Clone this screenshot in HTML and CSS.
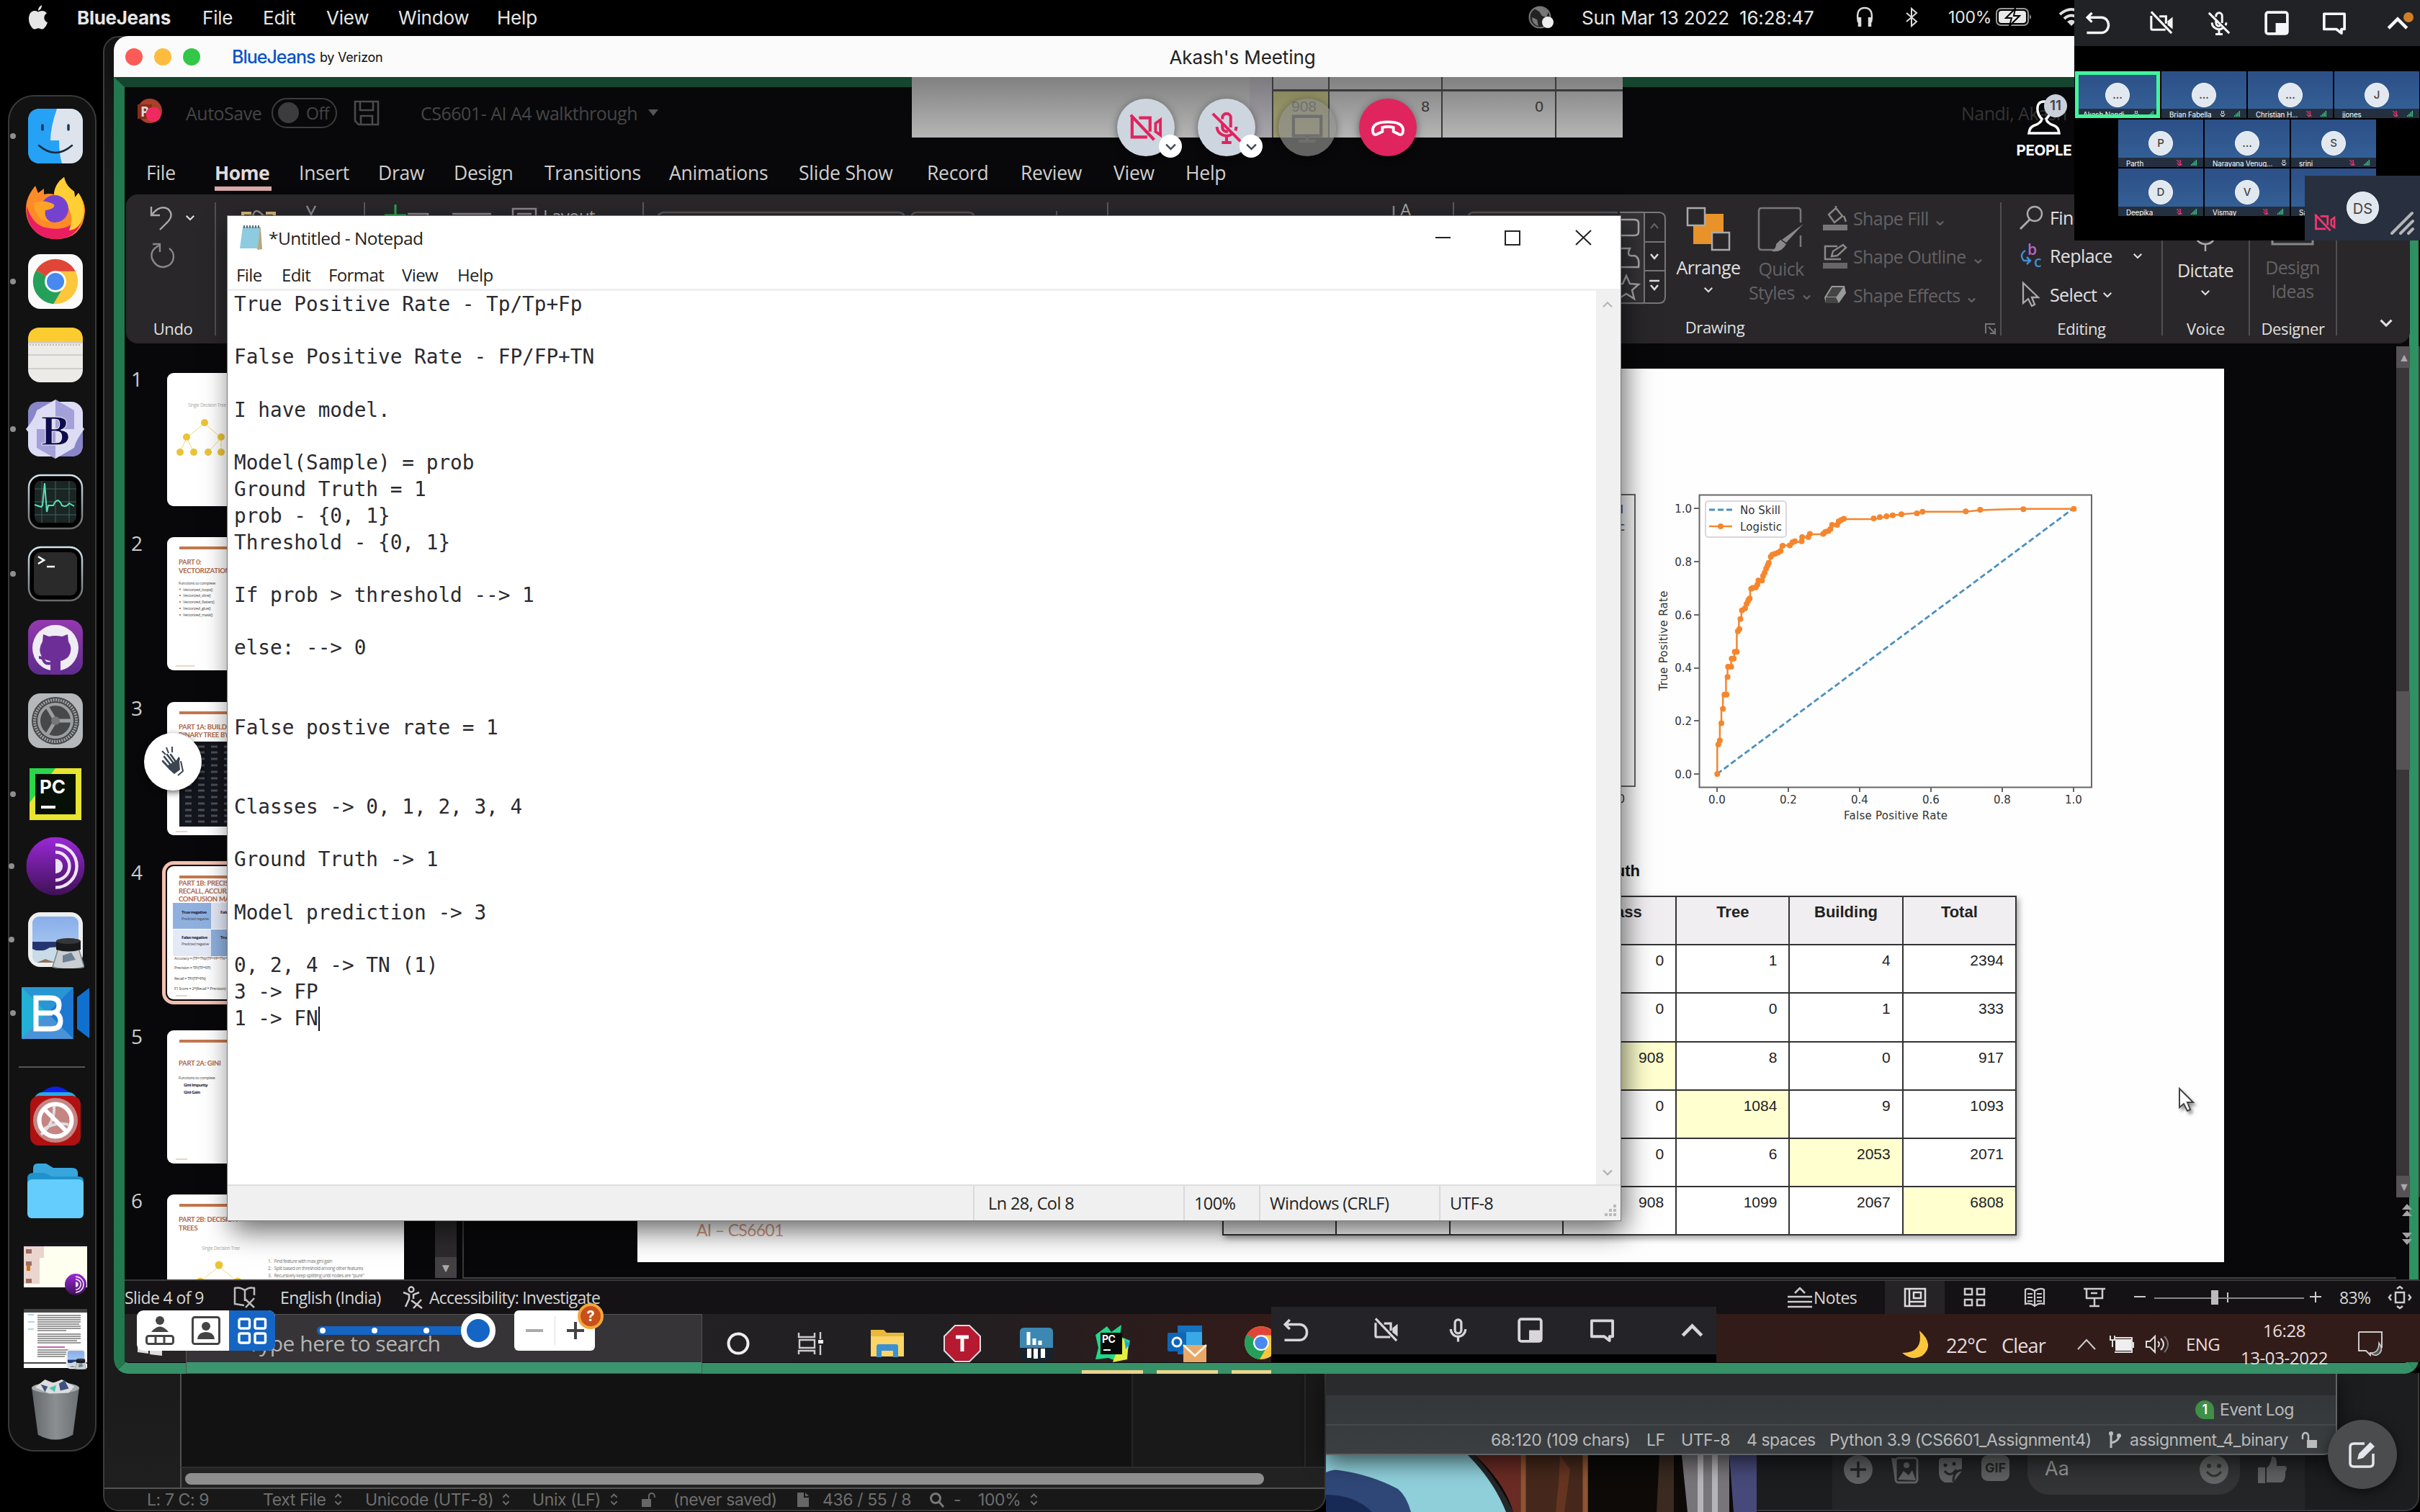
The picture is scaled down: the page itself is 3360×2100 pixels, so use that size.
FILE: index.html
```html
<!DOCTYPE html>
<html lang="en">
<head>
<meta charset="utf-8">
<title>Akash's Meeting</title>
<link rel="stylesheet" href="styles.css">
</head>
<body>
<svg class="defs" width="0" height="0">
  <defs>
    <linearGradient id="tor" x1="0" y1="0" x2="0" y2="1"><stop offset="0" stop-color="#9b28d8"/><stop offset="1" stop-color="#3f1157"/></linearGradient>
    <linearGradient id="sky" x1="0" y1="0" x2="0" y2="1"><stop offset="0" stop-color="#88adea"/><stop offset="1" stop-color="#b5d3f2"/></linearGradient>
    <linearGradient id="ring" x1="0" y1="0" x2="0" y2="1"><stop offset="0" stop-color="#cfe6ee"/><stop offset="1" stop-color="#6a6a6a"/></linearGradient>
    <linearGradient id="gh" x1="0" y1="0" x2="0" y2="1"><stop offset="0" stop-color="#9439ae"/><stop offset="1" stop-color="#5d2c8c"/></linearGradient>
    <linearGradient id="can" x1="0" y1="0" x2="1" y2="0"><stop offset="0" stop-color="#63676a"/><stop offset=".5" stop-color="#8b8f91"/><stop offset="1" stop-color="#6b6f72"/></linearGradient>
  </defs>
  <symbol id="camoff" viewBox="0 0 24 24"><path d="M2 1l20 21" stroke="currentColor" stroke-width="2.200" fill="none"/><path d="M10 5.500h6.500v7M16 18.500H3.200a1.200 1.200 0 0 1-1.200-1.200V5" fill="none" stroke="currentColor" stroke-width="2.200"/><path d="M18 10l5-4v12l-5-4z" fill="currentColor"/></symbol>
  <symbol id="camoff2" viewBox="0 0 24 24"><path d="M1 3l17 18M7 5h8v10M13 19H2V5" stroke="currentColor" stroke-width="2.200" fill="none"/><path d="M19 9l3.500-2.500v11L19 15z" fill="none" stroke="currentColor" stroke-width="2"/></symbol>
  <symbol id="micoff" viewBox="0 0 24 24"><path d="M2 2l20 20M9 6V5a3 3 0 0 1 6 0v7M9 9.500V12a3 3 0 0 0 4 2.800M5 11.500a7 7 0 0 0 11 5.300M19 11.500a7 7 0 0 1-.6 2.800M12 19v4M8.500 23h7" stroke="currentColor" stroke-width="2.100" fill="none"/></symbol>
  <symbol id="mic" viewBox="0 0 24 24"><path d="M9 5a3 3 0 0 1 6 0v7a3 3 0 0 1-6 0zM5 11a7 7 0 0 0 14 0M12 18v5" stroke="currentColor" stroke-width="2.200" fill="none"/></symbol>
  <symbol id="pip" viewBox="0 0 24 24"><rect x="1.500" y="1.500" width="21" height="21" rx="2" fill="none" stroke="currentColor" stroke-width="2.600"/><path d="M11 12h12v11H11z" fill="currentColor"/></symbol>
  <symbol id="chat" viewBox="0 0 24 24"><path d="M2 3h20v15h-3v4l-5-4H2z" fill="none" stroke="currentColor" stroke-width="2.600" stroke-linejoin="round"/></symbol>
  <symbol id="back" viewBox="0 0 24 24"><path d="M6 2L1.500 6.500 6 11M2 6.500h13.500a6.800 7.500 0 0 1 0 15H1" fill="none" stroke="currentColor" stroke-width="2.400"/></symbol>
  <symbol id="up" viewBox="0 0 24 24"><path d="M3 17l9-9 9 9" fill="none" stroke="currentColor" stroke-width="3.200"/></symbol>
  <symbol id="down" viewBox="0 0 24 24"><path d="M3 8l9 9 9-9" fill="none" stroke="currentColor" stroke-width="3.600"/></symbol>
  <symbol id="updn" viewBox="0 0 12 18"><path d="M1.500 6L6 1.500 10.500 6M1.500 12L6 16.500 10.500 12" fill="none" stroke="#6e6e6e" stroke-width="2"/></symbol>
  <symbol id="chrome" viewBox="0 0 48 48"><circle cx="24" cy="24" r="22" fill="#fdc73c"/><path d="M24 24L5 13A22 22 0 0 1 43.500 14H24z" fill="#e0453a"/><path d="M5 13a22 22 0 0 0 17 33l10-17-8-5z" fill="#25a05b"/><circle cx="24" cy="24" r="10.500" fill="#fff"/><circle cx="24" cy="24" r="8.500" fill="#4889f0"/></symbol>
  <symbol id="onion" viewBox="0 0 48 48"><circle cx="24" cy="24" r="24" fill="url(#tor)"/><path d="M24 6.500a17.500 17.500 0 0 1 0 35M24 12.500a11.500 11.500 0 0 1 0 23" fill="none" stroke="#efe4f6" stroke-width="2.600"/><path d="M24 18a6 6 0 0 1 0 12z" fill="#efe4f6"/></symbol>
  <symbol id="photo" viewBox="0 0 80 80"><rect x="2" y="2" width="76" height="76" rx="17" fill="#eeeeef"/><rect x="8" y="8" width="64" height="64" rx="9" fill="url(#sky)"/><path d="M8 43h64v12H8z" fill="#25356f"/><path d="M8 53q12 6 24-2 20-2 40 6v6q0 9-9 9H17q-9 0-9-9z" fill="#c8dbe6"/><path d="M14 72l12-5 14 5z" fill="#8b7560"/><path d="M44 52h28l8 26q-22 6-44 0z" fill="#c8ced2" stroke="#7d8488" stroke-width="1.500"/><path d="M50 62l12-4 6 10-18 4z" fill="#6d8092"/><path d="M41 42q17-7 34 0v12q-17 5-34 0z" fill="#17191a"/><ellipse cx="58" cy="42" rx="17" ry="4" fill="#343638"/></symbol>
  <symbol id="bars" viewBox="0 0 8 8"><path d="M0 8V6h1.400v2zM2.200 8V4h1.400v4zM4.400 8V2h1.400v6zM6.600 8V0H8v8z" fill="#3cc583"/></symbol>
  <symbol id="tinymic" viewBox="0 0 8 8"><path d="M2.600 0h2.800v3.500H2.600zM1 4a3 3 0 0 0 6 0M4 6v2M2 7.700h4" fill="none" stroke="currentColor" stroke-width="1"/></symbol>
  <symbol id="tinymicoff" viewBox="0 0 8 8"><path d="M0 0l7.500 7.500M2.800 1h2.800v3.500M1 4a3 3 0 0 0 5 2M4 6.500v1.300M2 7.700h4" fill="none" stroke="currentColor" stroke-width="1.100"/></symbol>
</svg>

<header class="menubar">
  <svg width="28" height="34" viewBox="0 0 28 34"><path d="M19 0q.6 5-4.800 8Q13.500 3 19 0zM14 9.500q3-1.800 6-1.500 4 .4 6 3.200-4 2.600-3.600 7 .4 4.200 4.600 6-1.600 4.800-4.800 8-2.200 2.200-5 .8-3-1.400-6 0-3 1.400-5-.8Q1.500 27 1 20.500.500 12 5.500 9 9 7 14 9.500z" fill="#e6e6e6"/></svg>
  <b>BlueJeans</b><span>File</span><span>Edit</span><span>View</span><span>Window</span><span>Help</span>
  <svg width="36" height="34" viewBox="0 0 36 34"><circle cx="16" cy="17" r="14.500" fill="#222" stroke="#777" stroke-width="2"/><path d="M8 5q8-5 14 0l6 4-3 8-6-2-4-6zM5 17l7 3 2 9q-9-2-9-12z" fill="#777"/><circle cx="27" cy="24" r="8" fill="#eee"/></svg>
  <span class="pre">Sun Mar 13 2022  16:28:47</span>
  <svg width="26" height="30" viewBox="0 0 26 30"><path d="M4 22Q0 2 13 2t9 20" fill="none" stroke="#ddd" stroke-width="2.400"/><path d="M6 15v13M20 15v13" stroke="#ddd" stroke-width="4.500"/></svg>
  <svg width="18" height="28" viewBox="0 0 18 28"><path d="M2 8l14 12-7 6V2l7 6L2 20" fill="none" stroke="#ddd" stroke-width="2"/></svg>
  <span class="pct">100%</span>
  <svg width="52" height="26" viewBox="0 0 52 26"><rect x="1" y="1" width="44" height="23" rx="6" fill="none" stroke="#999" stroke-width="2"/><rect x="4" y="4" width="38" height="17" rx="4" fill="#e8e8e8"/><path d="M47 9q4 3.500 0 7z" fill="#999"/><path d="M27 1L14 14h8l-3 11 14-14h-8z" fill="#e8e8e8" stroke="#000" stroke-width="2"/></svg>
  <svg width="36" height="28" viewBox="0 0 36 28"><path d="M2 10q16-14 32 0M8 16q10-9 20 0" fill="none" stroke="#ddd" stroke-width="4"/><path d="M12 20q6-5 12 0l-6 6z" fill="#ddd"/></svg>
</header>

<nav class="dock">
  <i class="ic run"><svg viewBox="0 0 76 76"><rect width="76" height="76" rx="17" fill="#dde4ee"/><path d="M40 0Q31 26 31 44h12q0 18 4 32H17Q0 76 0 59V17Q0 0 17 0z" fill="#25a2f5"/><path d="M20 23v6M56 23v6" stroke="#173a5e" stroke-width="3.500" stroke-linecap="round"/><path d="M15 51q23 20 46 0" fill="none" stroke="#1c2b3b" stroke-width="2.500" stroke-linecap="round"/></svg></i>
  <i class="ic"><svg viewBox="0 0 84 86"><path d="M42 86C16 86 0 66 1 42 2 28 8 20 14 12l4 10 8-6v8q8-2 14 0Q42 8 54 0q2 12 14 20l1 8 5-6q10 14 9 26-3 38-41 38z" fill="#ff8a28"/><path d="M42 86C16 86 0 66 2 40q8 26 26 30 34 8 52-20-4 36-38 36z" fill="#ea1d63"/><path d="M54 0q2 12 14 20l1 8 5-6q9 14 7 30-4 20-20 22 8-20-4-36-16-6-17-16Q42 8 54 0z" fill="#ffcf35"/><circle cx="41" cy="44" r="19" fill="#7542cf"/><path d="M12 36q14-6 28 2 2 6-12 8-2 12 8 16-22 0-24-26z" fill="#ffa328"/></svg></i>
  <i class="ic run"><svg viewBox="0 0 76 76"><rect width="76" height="76" rx="17" fill="#fafafa"/><use href="#chrome" x="4" y="4" width="68" height="68"/></svg></i>
  <i class="ic"><svg viewBox="0 0 76 76"><rect width="76" height="76" rx="17" fill="#ecebe8"/><path d="M0 20v-3Q0 0 17 0h42q17 0 17 17v3z" fill="#fccb30"/><path d="M0 21h76M0 38h76M0 57h76" stroke="#c6c5c2" stroke-width="1.500"/><path d="M2 24h72" stroke="#bbb" stroke-width="2" stroke-dasharray="2 2"/></svg></i>
  <i class="ic run"><svg viewBox="0 0 84 84"><rect x="4" y="4" width="76" height="76" rx="16" fill="#dcdcf6"/><path d="M4 42V20Q4 4 20 4h22v38zM42 42h38v22q0 16-16 16H42z" fill="#8885c8"/><path d="M16 16h52v52H16z" fill="#1a1a1a"/><path d="M42 1l26 15q2 10 14 26-12 16-14 26L42 83 16 68Q14 58 1 42q13-16 15-26z" fill="#dcdcf4"/><path d="M42 1l26 15v26H42zM16 42h26v41L16 68z" fill="#a3a0da"/><text x="42" y="64" text-anchor="middle" class="bb">B</text></svg></i>
  <i class="ic"><svg viewBox="0 0 76 76"><rect x="1" y="1" width="74" height="74" rx="17" fill="#000" stroke="url(#ring)" stroke-width="2.500"/><rect x="9" y="9" width="58" height="58" rx="8" fill="#1b2524"/><path d="M19 9v58M38 9v58M57 9v58M9 20h58M9 38h58M9 56h58" stroke="#3b6658"/><path d="M9 42l9 3 2-2 3-31 3 40 2-9h7q6-14 12 0 6 3 10-3l7 4" fill="none" stroke="#5ce0b8" stroke-width="2"/></svg></i>
  <i class="ic run"><svg viewBox="0 0 76 76"><rect x="1" y="1" width="74" height="74" rx="17" fill="#000" stroke="url(#ring)" stroke-width="2.500"/><rect x="8" y="8" width="60" height="60" rx="9" fill="#2a2a2a"/><path d="M14 14l8 5-8 5M26 28h11" fill="none" stroke="#fff" stroke-width="2.600"/></svg></i>
  <i class="ic"><svg viewBox="0 0 76 76"><rect width="76" height="76" rx="17" fill="url(#gh)"/><circle cx="38" cy="39" r="32" fill="#efedf3"/><path d="M21 20l8 3q9-2 18 0l8-3 1 10q7 10 0 21-5 5-11 6v19H31V57q-8-1-12-6-6-10 1-21z" fill="#6d2f97"/><path d="M15 52q6 0 7 5 3 5 9 3" fill="none" stroke="#6d2f97" stroke-width="4"/></svg></i>
  <i class="ic"><svg viewBox="0 0 76 76"><rect width="76" height="76" rx="17" fill="#b4b8ba"/><circle cx="38" cy="38" r="33" fill="#46484a"/><circle cx="38" cy="38" r="29" fill="none" stroke="#a0a3a5" stroke-width="4" stroke-dasharray="2 1.500"/><circle cx="38" cy="38" r="23" fill="none" stroke="#9c9fa1" stroke-width="4"/><path d="M38 38h23M38 38L26 18M38 38L26 58" stroke="#9c9fa1" stroke-width="5"/><circle cx="38" cy="38" r="6" fill="#777"/></svg></i>
  <i class="ic run"><svg viewBox="0 0 76 76"><rect x="2" y="2" width="72" height="72" fill="#e8e52f"/><path d="M2 2h36L2 50z" fill="#2ad64a"/><rect x="10" y="10" width="56" height="56" fill="#061006"/><text x="16" y="37" class="pc">PC</text><path d="M18 56h20" stroke="#fff" stroke-width="4"/></svg></i>
  <i class="ic run"><svg viewBox="-2 -2 52 52"><use href="#onion" width="48" height="48" x="0" y="0"/></svg></i>
  <i class="ic run"><svg viewBox="0 0 80 80"><use href="#photo"/></svg></i>
  <i class="ic wide run"><svg viewBox="0 0 94 72"><rect width="72" height="72" rx="2" fill="#1d78d2"/><path d="M0 0h72L36 36z" fill="#2896d4"/><path d="M0 0l36 36L0 72z" fill="#22b0d4"/><path d="M0 72l36-36 36 36z" fill="#4a92d8"/><path d="M77 14L94 1v70L77 58z" fill="#1070cf"/><path d="M20 15h20q12 0 12 10 0 8-6 10 8 3 8 12 0 11-13 11H20zM21 36h22" fill="none" stroke="#fff" stroke-width="7"/></svg></i>
  <hr>
  <i class="ic"><svg viewBox="0 0 76 84"><path d="M16 12Q38-10 60 12z" fill="#0d20e8"/><path d="M8 18q4-9 12-9h36q8 0 12 9z" fill="#28a9e5"/><rect x="3" y="14" width="70" height="69" rx="12" fill="#b01010"/><circle cx="38" cy="48" r="31" fill="#c58582"/><path d="M18 68q20-18 18-40M22 60q16-10 34-6" stroke="#ddd" stroke-width="4" fill="none"/><circle cx="38" cy="48" r="22.500" fill="none" stroke="#fff" stroke-width="6"/><path d="M22 32l32 32" stroke="#fff" stroke-width="6"/></svg></i>
  <i class="ic"><svg viewBox="0 0 80 78"><path d="M9 8q0-7 6-7h12l10 6h26q8 0 8 7v12H9z" fill="#38a6dc"/><path d="M1 22q0-8 8-8h16l10 5h38q6 0 6 7v20H1z" fill="#1f92cd"/><rect x="1" y="23" width="78" height="54" rx="6" fill="#64cdfe"/></svg></i>
  <i class="ic wide"><svg viewBox="0 0 88 74"><rect width="88" height="62" fill="#fffff0"/><path d="M0 0h88v5H0z" fill="#15151f"/><path d="M0 5h28v16H22v36H0z" fill="#ead4ce"/><path d="M3 9h8v6H3zM3 26h8v6H3zM3 50h8v6H3z" fill="#9c6e62"/><path d="M4 31h5v8H4z" fill="#cf7415"/><use href="#onion" x="57" y="43" width="30" height="30"/></svg></i>
  <i class="ic wide"><svg viewBox="0 0 88 86"><rect width="88" height="82" fill="#fff"/><path d="M0 0h88v5H0z" fill="#454545"/><path d="M0 75h88" stroke="#444" stroke-width="2"/><path d="M19 9h60M19 12h60M19 15h60M19 18h60M19 21h58M19 24h60M19 27h60M19 30h40M19 35h60M19 38h60M19 41h60M19 44h55M19 47h60M19 57h58M19 60h40M19 63h40M19 66h38" stroke="#777" stroke-width="1.300"/><path d="M6 8h8M6 18h9M6 28h8" stroke="#5ab0cc"/><path d="M19 53h38" stroke="#b03090" stroke-width="1.500"/><use href="#photo" x="58" y="55" width="29" height="29"/></svg></i>
  <i class="ic"><svg viewBox="0 0 70 88"><path d="M1 12h68l-9 68q-25 14-50 0z" fill="url(#can)"/><ellipse cx="35" cy="13" rx="34" ry="8" fill="#a7abad"/><path d="M6 12L20 1l12 5 12-5 18 10-8 9-28 1z" fill="#ddd"/><path d="M14 8l10 3-4 8zM40 7l8-5 6 12-12 3z" fill="#3c5380"/><path d="M26 13l10-4-2 10z" fill="#4cc6b2"/></svg></i>
</nav>

<section class="editor">
  <div class="ed-body"><div class="ed-text"></div><div class="ed-side"></div><div class="ed-edge"></div></div>
  <div class="ed-scroll"><i></i></div>
  <footer><span>L: 7 C: 9</span><span>Text File</span><svg width="11" height="17"><use href="#updn"/></svg><span>Unicode (UTF-8)</span><svg width="11" height="17"><use href="#updn"/></svg><span>Unix (LF)</span><svg width="11" height="17"><use href="#updn"/></svg>
    <svg width="20" height="20" viewBox="0 0 20 20"><path d="M1 9h13v11H1z" fill="#666"/><path d="M11 9V5q0-4 4-4t4 6" fill="none" stroke="#666" stroke-width="2"/></svg>
    <span>(never saved)</span><svg width="16" height="20" viewBox="0 0 16 20"><path d="M0 0h9v7h7v13H0zM11 0l5 5h-5z" fill="#666"/></svg><span>436 / 55 / 8</span>
    <svg width="22" height="22" viewBox="0 0 22 22"><circle cx="9" cy="9" r="6.500" fill="none" stroke="#777" stroke-width="3"/><path d="M13 13l7 8" stroke="#777" stroke-width="3"/></svg><span>-</span><span>100%</span><svg width="11" height="17"><use href="#updn"/></svg></footer>
</section>

<section class="messenger">
  <svg class="album" width="598" height="79" viewBox="0 0 598 79"><rect width="598" height="79" fill="#0d0a08"/><path d="M207 0h64v79h-11Q248 38 207 0z" fill="#6a2b24"/><path d="M270 0h94v79h-94z" fill="#45281b"/><path d="M274 0v79M360 0v79" stroke="#8e5433" stroke-width="7"/><path d="M325 0l14 20-8 59h-12l4-40z" fill="#7d3e26" opacity=".6"/><path d="M463 0h20v79h-24z" fill="#3a2a20"/><path d="M494 0h66v79h-58z" fill="#777579"/><path d="M520 0v79M540 0v79" stroke="#b5b4b8" stroke-width="8"/><path d="M560 0h38v79h-32z" fill="#47497a"/><path d="M0 0h206Q240 36 260 79H0z" fill="#25282a"/><path d="M0 0h197Q233 36 250 79H0z" fill="#8fcfda"/><path d="M0 24q10-5 18-3 44 6 82 26 12 10 18 32H0z" fill="#2f4777"/><path d="M0 55q40 0 64 24H0z" fill="#172a55"/></svg>
  <div class="gap"></div>
  <div class="composer">
    <svg width="40" height="40" viewBox="0 0 40 40"><circle cx="20" cy="20" r="20" fill="#606162"/><path d="M9 20h22M20 9v22" stroke="#242526" stroke-width="3.500"/></svg>
    <svg width="40" height="40" viewBox="0 0 40 40"><rect x="7" y="4" width="30" height="34" rx="4" fill="#242526" stroke="#606162" stroke-width="3"/><path d="M1 4h5v30zM10 34l8-12 7 6 5-7 5 14z" fill="#606162"/><circle cx="22" cy="14" r="4" fill="#606162"/></svg>
    <svg width="36" height="40" viewBox="0 0 36 40"><path d="M6 4h28v18L22 38H10q-8-4-8-14V8q0-4 4-4z" fill="#606162"/><path d="M10 22q8 10 16-2M34 21q-12 0-12 16" stroke="#242526" stroke-width="3" fill="none"/><circle cx="11" cy="14" r="2.500" fill="#242526"/><circle cx="23" cy="12" r="2.500" fill="#242526"/></svg>
    <b class="gif">GIF</b>
    <div class="aa"><span>Aa</span><svg width="40" height="40" viewBox="0 0 40 40"><circle cx="20" cy="20" r="20" fill="#646566"/><circle cx="13" cy="15" r="3" fill="#333"/><circle cx="27" cy="15" r="3" fill="#333"/><path d="M10 23q10 12 20 0" fill="none" stroke="#333" stroke-width="3"/></svg></div>
    <svg width="40" height="40" viewBox="0 0 40 40"><path d="M0 17h10v22H0zM12 18q7-6 7-16 8-2 7 13h12q4 3 0 8 1 12-5 15H12z" fill="#606162"/></svg>
  </div>
</section>
<section class="pycharm">
  <div class="py-top"></div>
  <div class="py-log"><i>1</i>Event Log</div>
  <footer><span>68:120 (109 chars)</span><span>LF</span><span>UTF-8</span><span>4 spaces</span><span>Python 3.9 (CS6601_Assignment4)</span>
    <svg width="20" height="26" viewBox="0 0 20 26"><circle cx="5" cy="4" r="3" fill="#bbb"/><circle cx="16" cy="7" r="3" fill="#bbb"/><path d="M5 4v20M16 7q0 8-11 10" fill="none" stroke="#bbb" stroke-width="3"/></svg>
    <span>assignment_4_binary</span><svg width="22" height="24" viewBox="0 0 22 24"><path d="M8 12h14v11H8z" fill="#bbb"/><path d="M10 12V6q-1-4-4-4T2 6v5" fill="none" stroke="#bbb" stroke-width="2.400"/></svg></footer>
</section>
<div class="compose"><svg width="42" height="42" viewBox="0 0 42 42"><path d="M24 6H9q-5 0-5 5v22q0 5 5 5h22q5 0 5-5V20" fill="none" stroke="#e4e6eb" stroke-width="3.500"/><path d="M14 28l2-8L32 4l6 6-16 16z" fill="#e4e6eb"/></svg></div>

<main class="meeting">
  <div class="titlebar"><i class="r"></i><i class="y"></i><i class="g"></i><span class="brand">BlueJeans</span><span class="by">by Verizon</span><h1>Akash's Meeting</h1></div>

  <div class="screen">
    <div class="pp-title">
      <svg width="40" height="40" viewBox="0 0 40 40"><circle cx="18" cy="17" r="17" fill="#a8402a"/><rect x="1" y="8" width="20" height="20" fill="#8a2b1b"/><text x="5" y="25" class="pp">P</text><circle cx="23" cy="22" r="10.500" fill="#ee2a5e"/></svg>
      <span>AutoSave</span><span class="toggle"><i></i>Off</span>
      <svg width="36" height="36" viewBox="0 0 36 36"><path d="M2 2h32v32H7l-5-5zM9 2v12h18V2M10 34V22h16v12" fill="none" stroke="#4a4a4a" stroke-width="2.600"/></svg>
      <span>CS6601- AI A4 walkthrough</span><svg class="caret" width="14" height="9" viewBox="0 0 14 9"><path d="M0 0h14L7 9z" fill="#555"/></svg><span class="owner">Nandi, Akash</span>
    </div>
    <div class="tabs"><span>File</span><span class="on">Home</span><span>Insert</span><span>Draw</span><span>Design</span><span>Transitions</span><span>Animations</span><span>Slide Show</span><span>Record</span><span>Review</span><span>View</span><span>Help</span></div>

    <div class="ribbon">
      <div class="grp undo">
        <div class="big"><svg width="32" height="36" viewBox="0 0 32 36"><path d="M2 3v12h12M3 14Q14 0 25 6q10 9-2 20L14 35" fill="none" stroke="#aaa" stroke-width="2.400"/></svg><svg class="chev" width="14" height="14"><use href="#down"/></svg></div>
        <div class="big"><svg width="36" height="36" viewBox="0 0 36 36"><path d="M4 2h10v11M13 4Q0 10 3 22q5 12 16 12 13-2 14-14 0-8-6-12" fill="none" stroke="#888" stroke-width="2.400"/></svg></div>
        <label>Undo</label>
      </div>
      <div class="grp mid">
        <svg width="1900" height="34" viewBox="300 270 1900 34"><g fill="none" stroke="#8b898b" stroke-width="2.500"><path d="M346 300h5q3-14 15 0h6"/><path d="M426 286l6 12 6-12"/><path d="M506 281v23M893 281v23M1467 293v11M1538 281v23M2018 281v23" stroke="#5c5a5d" stroke-width="2"/><path d="M1935 286v18M566 297h28v7M628 297h54M712 304v-14h32v14M718 297h20"/><path d="M913 304q0-9 10-9h325q8 0 8 9M1265 304q0-9 8-9h72q8 0 8 9M2038 304q0-9 8-9h200" stroke="#555"/></g><path d="M337 300v-4h12M369 296h12v4" fill="none" stroke="#d8b878" stroke-width="4"/><path d="M549 284v20M534 299h30" stroke="#2aa84f" stroke-width="3"/><text x="754" y="309">Layout ⌄</text><text x="1944" y="300" class="dim">A</text></svg>
      </div>
      <div class="grp drawing">
        <div class="gallery"><svg width="64" height="130" viewBox="0 0 64 130"><path d="M0 2h54q9 0 9 9v108q0 9-9 9H0M34 2v126M34 43h29M34 83h29" fill="none" stroke="#777" stroke-width="2"/><path d="M-6 12h26q6 0 6 5v12q0 5-6 5H-6zM0 52h14q-6 12 6 10 8 2 6 16H0M9 90l5 11 12 1-9 8 3 12-11-7-11 7 3-12-9-8 12-1z" fill="none" stroke="#aaa" stroke-width="2.500"/><path d="M43 24l5-6 5 6" fill="none" stroke="#666" stroke-width="2"/><path d="M43 60l5 6 5-6M41 97h14M43 103l5 6 5-6" fill="none" stroke="#ddd" stroke-width="2.600"/></svg></div>
        <div class="tile"><svg width="62" height="62" viewBox="0 0 62 62"><path d="M10 10h42v42H10z" fill="#e8922a"/><path d="M2 2h24v24H2zM36 36h24v24H36z" fill="#29272a" stroke="#aaa" stroke-width="2.500"/></svg><span>Arrange</span><svg class="chev" width="14" height="14"><use href="#down"/></svg></div>
        <div class="tile dim"><svg width="66" height="64" viewBox="0 0 66 64"><path d="M30 60H6q-4 0-4-4V6q0-4 4-4h50q4 0 4 4v16M60 40v16" fill="none" stroke="#777" stroke-width="2.500"/><path d="M64 24L40 50l-6-4zM32 46l8 6q-6 12-20 10 6-4 6-10z" fill="#888"/></svg><span>Quick</span><span class="l2">Styles ⌄</span></div>
        <div class="stack dim">
          <p><svg width="34" height="34" viewBox="0 0 34 34"><path d="M0 26h34v8H0z" fill="#777"/><path d="M8 12L18 3l9 11-11 9zM18 3v-3M29 14l3 8" fill="none" stroke="#888" stroke-width="2.500"/></svg>Shape Fill ⌄</p>
          <p><svg width="34" height="34" viewBox="0 0 34 34"><path d="M0 26h34v8H0z" fill="#666"/><path d="M20 3H3v18h22M12 17l2-7L28 1l4 4-12 11z" fill="none" stroke="#888" stroke-width="2.500"/></svg>Shape Outline ⌄</p>
          <p><svg width="34" height="30" viewBox="0 0 34 30"><path d="M2 18L12 2h18l2 10-10 14H4z" fill="#999"/><path d="M4 18h14l4 8H4zM13 4h15L19 17H5z" fill="#444"/></svg>Shape Effects ⌄</p>
        </div>
        <label>Drawing</label><svg class="launch" width="16" height="16" viewBox="0 0 16 16"><path d="M1 14V1h13M5 5l9 9V7m0 7H7" fill="none" stroke="#777" stroke-width="2"/></svg>
      </div>
      <div class="grp editing">
        <p><svg width="34" height="34" viewBox="0 0 34 34"><circle cx="21" cy="12" r="10" fill="none" stroke="#aaa" stroke-width="2.500"/><path d="M14 20L1 33" stroke="#aaa" stroke-width="3"/></svg>Find</p>
        <p><svg width="34" height="34" viewBox="0 0 34 34"><text x="11" y="16" fill="#b667c4">b</text><text x="20" y="33" fill="#3f8fd6">c</text><path d="M8 10q-9 6-2 14h9M10 19l5 5-5 5" fill="none" stroke="#3f8fd6" stroke-width="2.500"/></svg>Replace<svg class="chev far" width="14" height="14"><use href="#down"/></svg></p>
        <p><svg width="34" height="34" viewBox="0 0 34 34"><path d="M5 1v28l7-6 5 10 4-2-4-10h9z" fill="none" stroke="#aaa" stroke-width="2.300"/></svg>Select<svg class="chev" width="14" height="14"><use href="#down"/></svg></p>
        <label>Editing</label>
      </div>
      <div class="grp voice"><div class="tile"><svg width="32" height="62" viewBox="0 0 32 62"><path d="M2 38q2 14 14 14t14-14M16 52v10" fill="none" stroke="#aaa" stroke-width="2.500"/></svg><span>Dictate</span><svg class="chev" width="14" height="14"><use href="#down"/></svg></div><label>Voice</label></div>
      <div class="grp designer"><div class="tile dim"><svg width="60" height="62" viewBox="0 0 60 62"><path d="M2 2h56v50H2zM10 44h40" fill="none" stroke="#888" stroke-width="3"/></svg><span>Design</span><span class="l2">Ideas</span></div><label>Designer</label></div>
      <div class="grp tail"><svg width="20" height="20"><use href="#down"/></svg></div>
    </div>

    <div class="work">
      <div class="thumbs">
        <div class="th"><b>1</b><svg viewBox="0 0 329 185"><text x="29" y="19" class="t0">Single Decision Tree</text><path d="M52 42L27 62M52 42L75 62M27 62L18 82M27 62l10 20M75 62L57 82M75 62v20" stroke="#f0d77a"/><g fill="#ebc336"><circle cx="52" cy="69" r="5"/><circle cx="27" cy="89" r="5"/><circle cx="75" cy="89" r="5"/><circle cx="18" cy="110" r="5"/><circle cx="37" cy="110" r="5"/><circle cx="57" cy="110" r="5"/><circle cx="75" cy="110" r="5"/></g></svg></div>
        <div class="th"><b>2</b><svg viewBox="0 0 329 185"><path d="M17 15h300" stroke="#c4764c" stroke-width="4"/><text x="16" y="38" class="t1">PART 0:</text><text x="16" y="50" class="t1">VECTORIZATION</text><text x="16" y="66" class="t2">Functions to complete:</text><text x="22" y="75" class="t2">Vectorized_loops()</text><text x="22" y="83" class="t2">Vectorized_slice()</text><text x="22" y="92" class="t2">Vectorized_flatten()</text><text x="22" y="101" class="t2">Vectorized_glue()</text><text x="22" y="110" class="t2">Vectorized_mask()</text><path d="M17 72.500h2M17 81h2M17 90h2M17 99h2M17 108h2" stroke="#c4764c" stroke-width="2"/><path d="M12 179h26" stroke="#d9a78e"/></svg></div>
        <div class="th"><b>3</b><svg viewBox="0 0 329 185"><path d="M17 15h300" stroke="#c4764c" stroke-width="4"/><text x="16" y="38" class="t1">PART 1A: BUILDING</text><text x="16" y="49" class="t1">BINARY TREE BY HAND</text><path d="M17 55h280v118H17z" fill="#14161d"/><path d="M25 62h260M25 70h260M25 79h260M25 88h260M25 97h260M25 106h260M25 115h260M25 123h260M25 132h260M25 141h260M25 150h260M25 158h260M25 166h260" stroke="#4c4f58" stroke-width="3" stroke-dasharray="9 9"/><path d="M12 180h16" stroke="#d9a78e"/></svg></div>
        <div class="th cur"><b>4</b><svg viewBox="0 0 329 185"><path d="M17 15h300" stroke="#c4764c" stroke-width="4"/><text x="16" y="27" class="t1">PART 1B: PRECISION</text><text x="16" y="38" class="t1">RECALL, ACCURACY</text><text x="16" y="49" class="t1">CONFUSION MATRIX</text><path d="M8 51h53v36H8zM61 88h53v37H61z" fill="#8fb0df"/><path d="M61 51h53v36H61zM8 88h53v37H8z" fill="#e4e9f6"/><text x="20" y="66" class="t3">True negative</text><text x="20" y="101" class="t3">False negative</text><text x="74" y="66" class="t3">False positive</text><text x="74" y="101" class="t3">True positive</text><text x="20" y="75" class="t4">Predicted negative</text><text x="20" y="110" class="t4">Predicted negative</text><text x="10" y="130" class="t2">Accuracy = (TP+TN)/(TP+FP+TN+FN)</text><text x="10" y="143" class="t2">Precision = TP/(TP+FP)</text><text x="10" y="158" class="t2">Recall = TP/(TP+FN)</text><text x="10" y="172" class="t2">F1 Score = 2*(Recall * Precision)</text><path d="M12 180h16" stroke="#d9a78e"/></svg></div>
        <div class="th"><b>5</b><svg viewBox="0 0 329 185"><path d="M17 15h300" stroke="#c4764c" stroke-width="4"/><text x="16" y="49" class="t1">PART 2A: GINI</text><text x="16" y="68" class="t2">Functions to complete</text><text x="23" y="78" class="t3">Gini Impurity</text><text x="23" y="88" class="t3">Gini Gain</text><path d="M12 179h16" stroke="#d9a78e"/></svg></div>
        <div class="th"><b>6</b><svg viewBox="0 0 329 185"><path d="M17 15h300" stroke="#c4764c" stroke-width="4"/><text x="16" y="38" class="t1">PART 2B: DECISION</text><text x="16" y="50" class="t1">TREES</text><text x="48" y="77" class="t0">Single Decision Tree</text><path d="M72 100L46 121M72 100l26 21" stroke="#f0d77a"/><g fill="#ebc336"><circle cx="72" cy="98" r="5.500"/><circle cx="46" cy="121" r="5.500"/><circle cx="98" cy="121" r="5.500"/></g><text x="140" y="95" class="t0 d">1. &#160;&#160;Find feature with max gini gain</text><text x="140" y="105" class="t0 d">2. &#160;&#160;Split based on threshold among other features</text><text x="140" y="115" class="t0 d">3. &#160;&#160;Recursively keep splitting until nodes are "pure"</text></svg></div>
      </div>
      <div class="tscroll"><i>▼</i></div>
      <div class="stage">
        <div class="slide">
          <div class="foot">AI – CS6601</div>
          <svg class="chart" width="700" height="480" viewBox="2240 660 700 480">
            <g fill="none" stroke="#666" stroke-width="2"><path d="M2240 687h30v405h-30"/><rect x="2359.500" y="687.500" width="544.500" height="406"/><path d="M2352 706h7M2352 780h7M2352 854h7M2352 928h7M2352 1001h7M2352 1075h7M2384 1094v6M2483 1094v6M2582 1094v6M2681 1094v6M2780 1094v6M2879 1094v6"/></g>
            <path d="M2384 1075L2879 706" stroke="#4a90c0" stroke-width="2.800" stroke-dasharray="8 4"/>
            <g transform="translate(2240 600) scale(.714286 .446429)" fill="none" stroke="#f5862e">
              <path class="curve" d="M202 1064V972H207V906H210V861H213V817H219V762H222V730H229V705H235V684H240V620H244V582H249V555H257V535H260V518H266V488H271V483H279V462H290V445L302 408L308 385L325 372V353H347L352 342H366V327H380V318H408L424 303V290H437L448 271H506L542 260L561 256L590 252L602 248H685L713 243L797 239H895"/>
              <path class="dots" d="M202 1064h.1M204 972h.1M207 960h.1M210 906h.1M213 861h.1M216 817h.1M220 817h.1M222 762h.1M223 730h.1M229 730h.1M230 705h.1M234 705h.1M236 684h.1M240 684h.1M242 620h.1M245 613h.1M247 582h.1M250 555h.1M256 548h.1M259 535h.1M262 525h.1M265 518h.1M268 488h.1M271 485h.1M277 483h.1M280 475h.1M282 462h.1M289 462h.1M291 448h.1M294 438h.1M297 425h.1M300 415h.1M302 407h.1M306 388h.1M309 382h.1M314 379h.1M320 375h.1M325 370h.1M329 354h.1M343 353h.1M348 343h.1M353 340h.1M366 340h.1M367 327h.1M379 327h.1M382 317h.1M408 317h.1M412 311h.1M418 308h.1M422 302h.1M425 289h.1M435 289h.1M438 278h.1M443 274h.1M448 270h.1M506 269h.1M518 265h.1M531 262h.1M543 259h.1M560 256h.1M590 253h.1M601 248h.1M685 247h.1M713 242h.1M797 240h.1M895 239h.1"/>
            </g>
            <rect x="2368" y="696" width="112" height="50" rx="4" fill="#fff" stroke="#ddd5dd" stroke-width="2"/>
            <path d="M2373 708h32" stroke="#4a90c0" stroke-width="2.800" stroke-dasharray="8 4"/><path d="M2373 731h32" stroke="#f5862e" stroke-width="2.400"/><circle cx="2389" cy="731" r="4" fill="#f5862e"/>
            <g class="lbl"><text x="2416" y="713.500" textLength="56">No Skill</text><text x="2416" y="737" textLength="58">Logistic</text>
            <g text-anchor="end"><text x="2349" y="712">1.0</text><text x="2349" y="786">0.8</text><text x="2349" y="860">0.6</text><text x="2349" y="933">0.4</text><text x="2349" y="1007">0.2</text><text x="2349" y="1081">0.0</text><text x="2256" y="1115">1.0</text><text x="2254" y="713">No Skill</text><text x="2256" y="737">Logistic</text></g>
            <g text-anchor="middle"><text x="2384" y="1116">0.0</text><text x="2483" y="1116">0.2</text><text x="2582" y="1116">0.4</text><text x="2681" y="1116">0.6</text><text x="2780" y="1116">0.8</text><text x="2879" y="1116">1.0</text><text x="2632" y="1138" textLength="144">False Positive Rate</text><text transform="translate(2315 890) rotate(-90)" textLength="139">True Positive Rate</text></g></g>
          </svg>
          <div class="truth">Ground Truth</div>
          <table>
            <tr><th></th><th></th><th></th><th>Grass</th><th>Tree</th><th>Building</th><th>Total</th></tr>
            <tr><th></th><td></td><td></td><td>0</td><td>1</td><td>4</td><td>2394</td></tr>
            <tr><th></th><td></td><td></td><td>0</td><td>0</td><td>1</td><td>333</td></tr>
            <tr><th></th><td></td><td></td><td class="hl">908</td><td>8</td><td>0</td><td>917</td></tr>
            <tr><th></th><td></td><td></td><td>0</td><td class="hl">1084</td><td>9</td><td>1093</td></tr>
            <tr><th></th><td></td><td></td><td>0</td><td>6</td><td class="hl">2053</td><td>2071</td></tr>
            <tr><th></th><td></td><td></td><td>908</td><td>1099</td><td>2067</td><td class="hl">6808</td></tr>
          </table>
        </div>
      </div>
      <div class="vscroll"><i class="u">▲</i><i class="t"></i><i class="d">▼</i><svg width="14" height="60" viewBox="0 0 14 60"><path d="M7 0l7 8H0zM7 9l7 8H0zM0 40h14l-7 8zM0 49h14l-7 8z" fill="#a5a3a5"/></svg></div>
    </div>

    <div class="status">
      <span>Slide 4 of 9</span>
      <svg width="32" height="30" viewBox="0 0 32 30"><path d="M16 5Q9 0 2 2v22q7 1 13 2M16 5q6-5 13-3v10M16 5v15M16 17l13 12M29 16L17 29" fill="none" stroke="#bbb" stroke-width="2.500"/></svg>
      <span>English (India)</span>
      <svg width="30" height="32" viewBox="0 0 30 32"><circle cx="13" cy="5" r="3.500" fill="none" stroke="#ccc" stroke-width="2.300"/><path d="M2 9l8 3v6L5 29M24 9l-8 3v6M13 20L28 31M27 19L16 31" fill="none" stroke="#ccc" stroke-width="2.500"/></svg>
      <span class="acc">Accessibility: Investigate</span>
      <svg width="34" height="30" viewBox="0 0 34 30"><path d="M0 14h34M0 21h34M0 28h34M10 9l7-7 7 7" fill="none" stroke="#ccc" stroke-width="2.500"/></svg>
      <span>Notes</span>
      <div class="view on"><svg width="32" height="28" viewBox="0 0 32 28"><path d="M2 2h28v24H2zM8 2v24M8 20h22M14 7h10v8H14z" fill="none" stroke="#ddd" stroke-width="2.500"/></svg></div>
      <div class="view"><svg width="32" height="28" viewBox="0 0 32 28"><path d="M2 2h10v8H2zM19 2h10v8H19zM2 17h10v8H2zM19 17h10v8H19z" fill="none" stroke="#ccc" stroke-width="2.500"/></svg></div>
      <div class="view"><svg width="30" height="28" viewBox="0 0 30 28"><path d="M15 5Q8 0 2 3v20q7-2 13 3 6-5 13-3V3q-6-3-13 2v21M5 9h7M5 14h7M5 19h7M18 9h7M18 14h7M18 19h7" fill="none" stroke="#ccc" stroke-width="2.200"/></svg></div>
      <div class="view"><svg width="30" height="28" viewBox="0 0 30 28"><path d="M0 2h30M4 2v13h22V2M10 8h9M15 15v10M8 26h14" fill="none" stroke="#ccc" stroke-width="2.500"/></svg></div>
      <svg class="zoomer" width="262" height="30" viewBox="0 0 262 30"><path d="M0 14h16M252 7v15M244 14h16M130 8v14" stroke="#ccc" stroke-width="2"/><path d="M28 16h208" stroke="#888" stroke-width="2"/><path d="M107 5h10v20h-10z" fill="#bbb"/></svg>
      <span>83%</span>
      <svg width="32" height="32" viewBox="0 0 32 32"><path d="M10 9h12v14H10zM12 4l4-3 4 3M12 28l4 3 4-3M4 12l-3 4 3 4M28 12l3 4-3 4" fill="none" stroke="#ccc" stroke-width="2.500"/></svg>
    </div>

    <div class="taskbar">
      <div class="start"><svg width="34" height="34" viewBox="0 0 34 34"><path d="M0 5l15-2v14H0zM17 2l17-2v17H17zM0 19h15v12L0 29zM17 19h17v15l-17-2z" fill="#ddd"/></svg></div>
      <div class="search"><svg width="30" height="34" viewBox="0 0 30 34"><circle cx="19" cy="11" r="9" fill="none" stroke="#aaa" stroke-width="2.500"/><path d="M13 18L2 32" stroke="#aaa" stroke-width="2.500"/></svg><span>Type here to search</span></div>
      <div class="apps">
        <svg width="32" height="32" viewBox="0 0 32 32"><circle cx="16" cy="16" r="13.500" fill="none" stroke="#eee" stroke-width="4"/></svg>
        <svg width="36" height="32" viewBox="0 0 36 32"><path d="M1 1v6h22V1M2 11h21v11H2zM1 31v-5h22v5M31 0v10M31 18v14" fill="none" stroke="#ccc" stroke-width="2.400"/><path d="M28 11h7v5h-7z" fill="#eee"/></svg>
        <svg width="46" height="40" viewBox="0 0 46 40"><path d="M0 1h18l4 4h24v33H0z" fill="#e9b83c"/><path d="M0 10h46v28H0z" fill="#fcd566"/><path d="M8 39V24q0-3 3-3h24q3 0 3 3v15h-7v-9H15v9z" fill="#3a91d2"/></svg>
        <svg width="52" height="52" viewBox="0 0 52 52"><path d="M16 1h20l15 15v20L36 51H16L1 36V16z" fill="#b51a30" stroke="#ddd" stroke-width="2"/><path d="M17 17h18M26 17v20" stroke="#fff" stroke-width="5"/></svg>
        <svg width="46" height="46" viewBox="0 0 46 46"><rect width="46" height="46" rx="6" fill="#16222e"/><path d="M0 28V6q0-6 6-6h34q6 0 6 6v22z" fill="#3c88b3"/><path d="M12 6v18M20 15v9M28 18v6" stroke="#fff" stroke-width="5"/><path d="M13 29v13M22 29v14M32 29v13" stroke="#fff" stroke-width="6"/></svg>
        <div class="act"><svg width="52" height="52" viewBox="0 0 52 52"><path d="M4 14l16-12 6 8 14-10-2 16 14 6-6 24-14 4-10-4-18 2 4-16z" fill="#21d789"/><path d="M40 18l10 6-2 24-20 4z" fill="#e3ee3f"/><path d="M44 20l8 6-6 8z" fill="#18a5e8"/><rect x="11" y="11" width="30" height="30" fill="#080808"/><text x="13" y="25" class="pcs">PC</text><path d="M15 35h10" stroke="#fff" stroke-width="2"/></svg></div>
        <div class="act"><svg width="54" height="52" viewBox="0 0 54 52"><path d="M14 1h34v40H14z" fill="#1570bd"/><path d="M26 10h22v18H26z" fill="#38a8e8"/><rect y="11" width="26" height="26" rx="2" fill="#1066b5"/><circle cx="13" cy="24" r="6" fill="none" stroke="#fff" stroke-width="3"/><path d="M22 28h32v24H22z" fill="#eaa866"/><path d="M22 28l16 15 16-15" fill="none" stroke="#fff" stroke-width="2.500"/></svg></div>
        <div class="act"><svg width="52" height="50"><use href="#chrome"/></svg></div>
      </div>
      <div class="share"><svg><use href="#back"/></svg><svg><use href="#camoff"/></svg><svg><use href="#mic"/></svg><svg><use href="#pip"/></svg><svg><use href="#chat"/></svg><svg><use href="#up"/></svg></div>
      <div class="tray">
        <svg width="40" height="40" viewBox="0 0 40 40"><path d="M24 1q22 20 4 35-14 8-28-4 30 0 24-31z" fill="#fcc63c"/></svg>
        <span class="w">22°C</span><span class="w">Clear</span>
        <svg width="28" height="20" viewBox="0 0 28 20"><path d="M2 17L14 4l12 13" fill="none" stroke="#ccc" stroke-width="2"/></svg>
        <svg width="34" height="26" viewBox="0 0 34 26"><path d="M8 6h22v16H8z" fill="#eee"/><path d="M8 4h23v20H7M33 10v8M1 1v6h6V1M4 7v10" fill="none" stroke="#ddd" stroke-width="2"/></svg>
        <svg width="34" height="26" viewBox="0 0 34 26"><path d="M2 9h5l7-7v22l-7-7H2zM18 9q4 4 0 8M22 5q8 8 0 16" fill="none" stroke="#ddd" stroke-width="2"/><path d="M27 2q10 11 0 22" fill="none" stroke="#777" stroke-width="2"/></svg>
        <span>ENG</span><span class="clock">16:28<br>13-03-2022</span>
        <svg width="36" height="36" viewBox="0 0 36 36"><path d="M1 1h32v22M1 1v26h10l6 6v-4" fill="none" stroke="#ccc" stroke-width="2"/><path d="M29 16q8 12-3 17-5 1-8-3 11 0 11-14z" fill="#555" stroke="#ccc" stroke-width="1.500"/></svg>
      </div>
    </div>
    <div class="frame"></div>
  </div>
</main>

<div class="preview"><span class="strip"></span><span class="c0"><em>908</em></span><span><em>8</em></span><span><em>0</em></span><span></span></div>

<section class="notepad">
  <div class="np-title"><svg width="34" height="34" viewBox="0 0 34 34"><path d="M5 3h25l2 30-6 1z" fill="#b9a878"/><path d="M5 2h24l-3 30H1z" fill="#8fcbe0"/><path d="M6 2h22" stroke="#5b6e70" stroke-width="4" stroke-dasharray="2 2"/></svg><span>*Untitled - Notepad</span>
    <svg class="ctl" width="220" height="24" viewBox="0 0 220 24"><path d="M0 11h21M97 2h20v19H97zM195 1l21 20M216 1l-21 20" fill="none" stroke="#222" stroke-width="2"/></svg></div>
  <div class="np-menu"><span>File</span><span>Edit</span><span>Format</span><span>View</span><span>Help</span></div>
  <div class="np-body"><pre>True Positive Rate - Tp/Tp+Fp

False Positive Rate - FP/FP+TN

I have model.

Model(Sample) = prob
Ground Truth = 1
prob - {0, 1}
Threshold - {0, 1}

If prob &gt; threshold --&gt; 1

else: --&gt; 0


False postive rate = 1


Classes -&gt; 0, 1, 2, 3, 4

Ground Truth -&gt; 1

Model prediction -&gt; 3

0, 2, 4 -&gt; TN (1)
3 -&gt; FP
1 -&gt; FN<i></i></pre>
    <div class="np-scroll"><svg width="16" height="16"><use href="#up"/></svg><svg width="16" height="16"><use href="#down"/></svg></div></div>
  <div class="np-status"><span></span><span>Ln 28, Col 8</span><span>100%</span><span>Windows (CRLF)</span><span>UTF-8</span>
    <svg class="grab" width="18" height="18" viewBox="0 0 18 18"><path d="M12 0h4v4h-4zM6 6h4v4H6zM12 6h4v4h-4zM0 12h4v4H0zM6 12h4v4H6zM12 12h4v4h-4z" fill="#bbb"/></svg></div>
</section>

<svg class="pointer" width="24" height="36" viewBox="0 0 24 36"><path d="M2 2v26l6-5 5 10 4-2-4-10h8z" fill="#fff" stroke="#444" stroke-width="2"/></svg>

<div class="calls">
  <div class="rb lite"><svg><use href="#camoff2"/></svg><i><svg><use href="#down"/></svg></i></div>
  <div class="rb lite"><svg><use href="#micoff"/></svg><i><svg><use href="#down"/></svg></i></div>
  <div class="rb mute"><svg viewBox="0 0 24 24"><path d="M2 4h20v14H2zM12 18v4M6 22h12" fill="none" stroke="#6f6f6d" stroke-width="2.200"/></svg></div>
  <div class="rb hang"><svg viewBox="0 0 24 24"><path d="M1 14q0-6 11-6t11 6q0 4-3 3l-4-2v-3q-4-1-8 0v3l-4 2q-3 1-3-3z" fill="none" stroke="#fff" stroke-width="2"/></svg></div>
</div>

<div class="people"><svg width="46" height="48" viewBox="0 0 46 48"><path d="M23 2q-10 0-9 12 1 8 6 12-1 6-10 9-7 2-8 11h42q-1-9-8-11-9-3-10-9 5-4 6-12 1-12-9-12z" fill="none" stroke="#fff" stroke-width="3.500"/></svg><i>11</i><b>PEOPLE</b></div>

<div class="clap"><svg width="34" height="42" viewBox="0 0 34 42"><path d="M8 1l3 8M16 0v8M2 6l5 5" stroke="#3c4650" stroke-width="2"/><path d="M5 14L16 28M3 20l11 12M9 11l12 16M14 11l10 14" stroke="#3c4650" stroke-width="2.600" stroke-linecap="round"/><path d="M10 26l12-7 3-5q3 2 1 6l1 12-8 6q-5-3-9-12z" fill="#3c4650"/><path d="M28 20l3 14-7 6" fill="none" stroke="#3c4650" stroke-width="2"/></svg></div>

<div class="layouts">
  <span><svg width="40" height="40" viewBox="0 0 40 40"><circle cx="20" cy="6" r="6" fill="#444"/><path d="M8 22q12-15 24 0z" fill="#444"/><rect x="1.500" y="27.500" width="37" height="11" rx="3" fill="none" stroke="#444" stroke-width="3"/><path d="M14 28v10M26 28v10" stroke="#444" stroke-width="3"/></svg></span>
  <span><svg width="40" height="40" viewBox="0 0 40 40"><rect x="1.500" y="1.500" width="37" height="37" rx="3" fill="none" stroke="#444" stroke-width="3"/><circle cx="20" cy="14" r="6" fill="#444"/><path d="M8 32q1-10 12-10t12 10z" fill="#444"/></svg></span>
  <span class="on"><svg width="40" height="37" viewBox="0 0 40 37"><g fill="none" stroke="#fff" stroke-width="3.400"><rect x="2" y="2" width="14.500" height="13" rx="2"/><rect x="24" y="2" width="14.500" height="13" rx="2"/><rect x="2" y="22" width="14.500" height="13" rx="2"/><rect x="24" y="22" width="14.500" height="13" rx="2"/></g></svg></span>
</div>
<div class="slider"><i></i><i></i><i></i><b></b></div>
<div class="zoombox"><span class="off"></span><span class="plus"></span><i>?</i></div>

<aside class="panel">
  <div class="bar"><svg><use href="#back"/></svg><svg><use href="#camoff"/></svg><svg><use href="#micoff"/></svg><svg><use href="#pip"/></svg><svg><use href="#chat"/></svg><svg><use href="#up"/></svg><i></i></div>
  <div class="tiles">
    <div class="p speak"><b>...</b><p>Akash Nandi<svg><use href="#tinymic"/></svg><svg><use href="#bars"/></svg></p></div>
    <div class="p"><b>...</b><p>Brian Fabella<svg><use href="#tinymic"/></svg><svg><use href="#bars"/></svg></p></div>
    <div class="p"><b>...</b><p>Christian H...<svg class="m"><use href="#tinymicoff"/></svg><svg><use href="#bars"/></svg></p></div>
    <div class="p"><b>J</b><p>jjones<svg class="m"><use href="#tinymicoff"/></svg><svg><use href="#bars"/></svg></p></div>
  </div>
  <div class="tiles">
    <div class="p"><b>P</b><p>Parth<svg class="m"><use href="#tinymicoff"/></svg><svg><use href="#bars"/></svg></p></div>
    <div class="p"><b>...</b><p>Narayana Venug...<svg><use href="#tinymic"/></svg></p></div>
    <div class="p"><b>S</b><p>srini<svg class="m"><use href="#tinymicoff"/></svg><svg><use href="#bars"/></svg></p></div>
  </div>
  <div class="tiles">
    <div class="p"><b>D</b><p>Deepika<svg class="m"><use href="#tinymicoff"/></svg><svg><use href="#bars"/></svg></p></div>
    <div class="p"><b>V</b><p>Vismay<svg class="m"><use href="#tinymicoff"/></svg><svg><use href="#bars"/></svg></p></div>
    <div class="p"><b></b><p>Sa</p></div>
  </div>
  <div class="self"><svg class="cam"><use href="#camoff2"/></svg><b>DS</b><svg class="grip" viewBox="0 0 32 32"><path d="M1 30L29 2M13 30L30 13M24 30L30 24" stroke="#b5b5b5" stroke-width="4" stroke-linecap="round"/></svg></div>
</aside>
</body>
</html>
```
FILE: styles.css
```css
*{box-sizing:border-box}
body{margin:0;width:3360px;height:2100px;background:#000;overflow:hidden;position:relative;font-family:"Inter",sans-serif;color:#e6e6e6}
svg{display:block;flex:none;overflow:visible}
.defs{position:absolute}
i{font-style:normal;display:block}
p{margin:0}

/* macOS menu bar */
.menubar{height:50px;padding-left:39px;display:grid;grid-template-columns:68px 174px 84px 88px 100px 137px 1432px 74px 380px 69px 60px 66px 87px 36px;align-items:center;font-size:26px;white-space:nowrap;letter-spacing:-.2px}
.menubar b{font-weight:700;letter-spacing:-.3px}
.menubar>*{position:relative;top:-1px}
.pre{white-space:pre}
.menubar .pct{font-size:23px}

/* dock */
.dock{position:absolute;left:11px;top:132px;width:123px;height:1884px;border:2px solid #3a3a3a;border-radius:36px;background:#121212}
.ic{position:absolute;left:26px;width:76px}
.ic svg{width:100%}
.ic:nth-child(1){top:17px}.ic:nth-child(2){top:112px;left:22px;width:84px}.ic:nth-child(3){top:219px}.ic:nth-child(4){top:321px}
.ic:nth-child(5){top:420px;left:22px;width:84px}.ic:nth-child(6){top:525px}.ic:nth-child(7){top:625px}.ic:nth-child(8){top:727px}
.ic:nth-child(9){top:829px}.ic:nth-child(10){top:931px}.ic:nth-child(11){top:1025px;left:20px;width:88px}.ic:nth-child(12){top:1131px;width:80px;left:24px}
.ic:nth-child(13){top:1237px;left:17px;width:94px}.ic:nth-child(15){top:1374px}.ic:nth-child(16){top:1481px;left:24px;width:80px}
.ic:nth-child(17){top:1592px;left:20px;width:88px}.ic:nth-child(18){top:1684px;left:20px;width:88px}.ic:nth-child(19){top:1781px;left:30px;width:68px}
.run::before{content:"";position:absolute;left:-25px;top:50%;margin-top:-4px;width:8px;height:8px;border-radius:4px;background:#8e8e8e}
.ic:nth-child(5)::before,.ic:nth-child(11)::before{left:-21px}.wide.run::before{left:-16px}
.dock hr{position:absolute;left:13px;top:1347px;width:92px;height:2px;border:0;margin:0;background:#555}
.bb{font:700 60px "Liberation Serif",serif;fill:#0e0c4e;stroke:#eee;stroke-width:1px}
.pc{font:700 26px "Inter",sans-serif;fill:#fff}
.pcs{font:700 14px "Inter",sans-serif;fill:#fff}

/* text editor window */
.editor{position:absolute;left:143px;top:50px;width:1698px;height:2049px;border:2px solid #3c3c3c;border-radius:22px;background:linear-gradient(#111,#1c1c1c 10%,#1b1b1b 92%,#202020);overflow:hidden;display:flex;flex-direction:column}
.ed-body{flex:1;margin-left:105px;border-left:2px solid #505050;display:flex;background:#121212}
.ed-text{width:1319px}.ed-side{width:240px;border-left:2px solid #262626;background:#191919}.ed-edge{flex:1;border-left:2px solid #262626;background:#191919}
.ed-scroll{height:29px;margin-left:105px;border-left:2px solid #505050;background:#222;border-top:2px solid #2e2e2e;padding:7px 0 0 5px}
.ed-scroll i{width:1498px;height:16px;border-radius:8px;background:#8e8e8e}
.editor footer{height:31px;border-top:2px solid #545454;background:#181818;color:#6e6e6e;font-size:23px;letter-spacing:-.4px;display:grid;align-items:center;white-space:nowrap;padding-left:59px;grid-template-columns:160px 99px 43px 190px 42px 107px 43px 45px 173px 35px 148px 34px 34px 73px 20px}
.editor footer{grid-template-columns:161px 99px 43px 190px 42px 108px 43px 45px 172px 35px 148px 34px 34px 72px 20px}

/* chat window */
.messenger{position:absolute;left:1841px;top:1907px;width:1518px;height:192px;background:#1b1d1e;border:solid #3a3a3a;border-width:0 2px 2px 0;border-radius:0 0 20px 0;display:flex;padding-top:114px}
.gap{width:105px}
.composer{width:656px;background:#242526;display:flex;padding-left:16px;align-items:flex-start}
.composer>*{margin-right:25px}
.gif{width:39px;height:36px;background:#606162;border-radius:9px;color:#242526;font-size:18px;text-align:center;line-height:36px}
.aa{width:295px;height:55px;border-radius:0 0 30px 30px;background:#333435;display:flex;justify-content:space-between;padding:0 16px 0 24px;color:#999;font-size:27px;line-height:38px}
.compose{position:absolute;left:3232px;top:1972px;width:96px;height:96px;border-radius:50%;background:#4b4c4e;display:grid;place-items:center;z-index:2;box-shadow:0 4px 16px #0008}
.pycharm{position:absolute;left:1841px;top:1907px;width:1404px;height:114px;border:2px solid #606364;border-width:0 2px 2px 0;border-radius:0 0 20px 0;overflow:hidden;color:#b8babb;background:linear-gradient(#313436,#3c3f41);box-shadow:0 10px 30px #0009}
.py-top{height:31px;background:#2a2b2d}
.py-log{height:42px;border-bottom:2px solid #46494b;display:flex;align-items:center;padding-left:1207px;font-size:23px;letter-spacing:-.6px;gap:8px;white-space:nowrap}
.py-log i{width:26px;height:26px;border-radius:13px 13px 0 13px;background:#3f8f47;color:#fff;text-align:center;font:600 18px/26px "Inter",sans-serif}
.pycharm footer{height:40px;display:grid;grid-template-columns:216px 48px 91px 115px 386px 31px 238px 22px;padding-left:229px;align-items:center;font-size:23px;letter-spacing:-.45px;white-space:nowrap}

/* meeting window */
.meeting{position:absolute;left:158px;top:50px;width:3202px;height:1858px;border-radius:20px 0 20px 20px;overflow:hidden}
.titlebar{height:57px;background:#fbfbfb;color:#222;display:flex;align-items:center;padding-left:16px;position:relative}
.titlebar i{width:24px;height:24px;border-radius:50%;margin-right:16px}
.r{background:#fc5b57}.y{background:#febc3f}.g{background:#33c748}
.brand{margin-left:28px;font:500 25px "Inter",sans-serif;letter-spacing:-1px;color:#0a53c8;width:117px}
.by{margin-left:5px;font-size:18px;letter-spacing:-.3px;color:#111;padding-top:2px}
.titlebar h1{position:absolute;left:0;right:68px;text-align:center;margin:0;font-weight:400;font-size:26px;letter-spacing:-.1px;top:14px}
.screen{position:relative;height:1801px;padding-left:15px;background:#08080a;font-family:"Open Sans",sans-serif;display:flex;flex-direction:column;overflow:hidden}
.frame{position:absolute;inset:0 2px 0 0;border:solid #23784e;border-width:14px 13px 15px 15px;border-top-color:#15452e;border-bottom-color:#369168;border-right-color:#2f9061;border-radius:0 0 20px 20px;z-index:0}
.pp-title{height:99px;padding:5px 0 5px 17px;display:grid;grid-template-columns:68px 119px 114px 93px 314px 1825px 200px;align-items:center;color:#454545;font-size:25px;letter-spacing:-.5px;white-space:nowrap}
.pp{font:700 19px "Open Sans",sans-serif;fill:#ddd}
.toggle{display:flex;align-items:center;width:91px;height:42px;border:2px solid #3c3c3c;border-radius:21px;padding-left:7px;gap:10px;font-size:23px}
.toggle i{width:29px;height:29px;border-radius:50%;background:#3c3c3c}
.caret{margin-left:2px}
.owner{color:#333}
.tabs{height:64px;padding:0 0 0 30px;display:grid;grid-template-columns:95px 117px 110px 105px 126px 173px 180px 178px 130px 129px 100px 80px;font-size:26.500px;letter-spacing:-.25px;color:#cfcfcf;white-space:nowrap}
.tabs span{height:64px;line-height:68px}
.tabs .on{font-weight:700;color:#e2dada;letter-spacing:-.6px;background:linear-gradient(#d8a9a7,#d8a9a7) 0 53px/79px 6px no-repeat}
.ribbon{height:207px;background:#29272a;border-radius:16px;margin:0 14px 0 2px;display:flex;color:#e0e0e0;font-size:25px;letter-spacing:-.6px;position:relative;z-index:1}
.grp{position:relative;white-space:nowrap}
.grp::after{content:"";position:absolute;right:-1px;top:11px;bottom:11px;width:2px;background:#514f52}
.grp label{position:absolute;bottom:6px;left:0;right:0;text-align:center;font-size:22px;letter-spacing:-.4px}
.undo{width:124px;padding:14px 0 0 33px}
.undo label{left:6px}
.undo .big{display:flex;align-items:center;gap:17px;height:36px;margin-bottom:17px}
.mid{width:1950px}
.mid::after{display:none}
.mid svg{margin-left:1px}
.mid text{font-size:24px;fill:#aaa}
.drawing{width:529px;display:flex;padding-top:17px}
.drawing label{right:265px;bottom:8px}
.launch{position:absolute;right:6px;bottom:12px}
.gallery{width:64px;padding-top:6px}
.gallery svg{background:linear-gradient(90deg,#353336 34px,#29272a 34px)}
.tile{display:flex;flex-direction:column;align-items:center;width:120px}
.tile span{height:34px;line-height:34px;margin-top:5px}
.tile .chev{margin-top:7px}
.tile .l2{margin-top:-1px}
.drawing .tile{width:118px}
.drawing .tile.dim{width:84px}
.dim{color:#646264}
.stack{padding:0 0 0 16px;width:230px;margin-top:-11px}
.stack p,.editing p{height:53.500px;display:flex;align-items:center;gap:8px;line-height:34px}
.editing{width:224px;padding:5px 0 0 26px}
.editing svg text{font:600 21px "Open Sans",sans-serif}
.far{margin-left:20px}
.voice{width:121px;padding-top:17px}.designer{width:121px;padding-top:17px}
.voice .tile span{margin-top:9px}
.tail{width:99px;padding:168px 0 0 59px}
.tail::after{display:none}

.work{flex:1;display:flex;min-height:0;overflow:hidden}
.thumbs{width:431px;height:1303px;overflow:hidden;padding-top:41px}
.th{display:flex;height:228.300px}
.th b{width:59px;padding-left:9px;font-weight:400;font-size:28px;line-height:17px;color:#ccc}
.th svg{width:329px;height:185px;background:#fff;border-radius:9px;overflow:hidden}
.cur svg{outline:5px solid #f5bfae;outline-offset:2px}
.th:first-child svg path,.th:first-child svg text{transform:translateY(28px)}
.t0{font:6.500px "Open Sans",sans-serif;fill:#aaa;letter-spacing:-.4px}
.d{fill:#777}
.t1{font:700 9.500px "Lato",sans-serif;fill:#b0694c;letter-spacing:-.3px}
.t2{font:5.500px "Open Sans",sans-serif;fill:#444;letter-spacing:-.3px}
.t3{font:700 6px "Open Sans",sans-serif;fill:#223;letter-spacing:-.5px}
.t4{font:5px "Open Sans",sans-serif;fill:#445;letter-spacing:-.3px}
.tscroll{width:30px;height:1298px;background:#2c2a2c;display:flex;align-items:flex-end}
.tscroll i{width:30px;height:29px;background:#434143;color:#aaa;font-size:17px;line-height:29px;text-align:center}
.stage{flex:1;margin-left:8px;border-left:2px solid #3a393a;border-bottom:2px solid #444;height:1299px;padding:35px 0 0 241px}
.slide{position:relative;width:2203px;height:1241px;background:#fefefe}
.foot{position:absolute;left:82px;top:1178px;font:23px/36px "Lato",sans-serif;letter-spacing:-.7px;color:#d49a7e}
.chart{position:absolute;left:1355px;top:148px}
.curve{stroke-width:2.500px;vector-effect:non-scaling-stroke}
.dots{stroke-width:8px;stroke-linecap:round;vector-effect:non-scaling-stroke}
.lbl text{font:15px "DejaVu Sans",sans-serif;fill:#333}
.truth{position:absolute;right:811px;top:684px;font:700 22px/28px "Liberation Sans",sans-serif;color:#111}
.slide table{position:absolute;left:812px;top:732px;border-collapse:collapse;width:1103px;table-layout:fixed;box-shadow:3px 4px 8px #6669;font:21px/24px "Liberation Sans",sans-serif;color:#222;background:#fff}
.slide td,.slide th{border:2px solid #333;height:67.200px;padding:9px 16px 0;vertical-align:top;text-align:right}
.slide th{background:#f0eef0;text-align:center;padding:9px 0 0;font-size:22px}
.slide .hl{background:#ffffcf}
.vscroll{position:relative;width:33px;margin-top:4px;height:1182px;background:#39363a}
.vscroll i{position:absolute;left:0;width:19px;background:#565256;color:#aaa;font-size:16px;text-align:center;line-height:30px;z-index:1}
.vscroll .u{top:0;height:30px;padding-left:3px}.vscroll .t{top:479px;height:109px}.vscroll .d{bottom:0;height:30px;padding-left:3px}
.vscroll svg{position:absolute;left:8px;top:1191px;z-index:1}
.status{height:48px;border-top:2px solid #3a393a;background:#141214;display:grid;align-items:center;font-size:23px;letter-spacing:-.6px;color:#d6d6d6;white-space:nowrap;grid-template-columns:151px 65px 169px 38px 1886px 36px 99px 83px 83px 83px 83px 299px 68px 34px;padding-left:0;position:relative;z-index:1}
.status .acc{letter-spacing:-.75px}
.status .view{display:grid;place-items:center;height:46px}
.view.on{background:#252326}
.zoomer{margin-left:14px}
.taskbar{position:relative;z-index:1;height:83px;display:flex;background:linear-gradient(90deg,#272426,#211f22 35%,#321b19 50%,#321c1a);background-size:100% 67px;background-repeat:no-repeat;letter-spacing:-.6px}
.start{width:85px;padding:24px 0 0 18px}
.search{width:717px;height:83px;background:linear-gradient(#373437 66px,#3b966f 66px);border:1px solid #555;display:flex;padding:16px 0 0 24px;font-size:30px;gap:31px;color:#b5b5b5;line-height:48px;letter-spacing:-.45px}
.apps{width:790px;display:flex;height:83px;padding-left:34px;overflow:hidden;position:relative}
.apps>svg:nth-child(1){margin:25px 67px 0 0}.apps>svg:nth-child(2){margin:25px 65px 0 0}.apps>svg:nth-child(3){margin:21px 55px 0 0}.apps>svg:nth-child(4){margin:15px 54px 0 0}.apps>svg:nth-child(5){margin:19px 40px 0 0}
.act{flex:none;width:85px;margin:0 19px 0 0;height:83px;padding:15px 0 0 15px;border-bottom:5px solid #e9d58e}
.share{width:618px;height:77px;margin-top:-10px;background:linear-gradient(#242328 66px,#000 66px);display:grid;grid-template-columns:125px 100px 100px 100px 125px 33px;padding:15px 0 0 17px;color:#d8d6d9;z-index:3}
.share svg,.bar svg{width:35px;height:35px}
.tray{display:grid;grid-template-columns:61px 77px 104px 46px 49px 57px 75px 164px 40px;grid-template-rows:83px;padding-left:258px;height:83px;width:962px;align-items:center;color:#e4dede;white-space:nowrap;font-size:24px}
.tray .w{font-size:27px;letter-spacing:-.8px;padding-top:4px}
.tray .clock{line-height:38px;text-align:center;width:125px;font-size:24px;margin-left:-1px;letter-spacing:-.4px}

/* floating thumbnail behind the call buttons */
.preview{position:absolute;left:1266px;top:107px;width:987px;height:84px;background:linear-gradient(#808080,#b6b6b6);display:grid;grid-template-columns:469px 33px 78px 157px 158px 92px;font:21px/24px "Liberation Sans",sans-serif;color:#333}
.preview::before{content:""}
.preview span{border-right:2px solid #3a3a3a;background:linear-gradient(transparent 17px,#3a3a3a 17px,#3a3a3a 20px,transparent 20px);text-align:right;padding:29px 16px 0 0}
.preview span:last-child{border:0}
.preview .strip{background:linear-gradient(#7c7a7f,#aaa6ae)}
.preview .c0{background:linear-gradient(#858585 17px,#3a3a3a 17px,#3a3a3a 20px,#8a885e 20px,#a5a377)}
.preview em{font-style:normal}

/* notepad */
.notepad{position:absolute;left:316px;top:300px;width:1934px;height:1395px;background:#fff;color:#222;font-family:"Open Sans",sans-serif;display:flex;flex-direction:column;box-shadow:0 0 0 1px #777,6px 14px 36px #0009;z-index:2}
.np-title{height:61px;display:flex;align-items:center;padding-left:17px;gap:7px;font-size:24.500px;letter-spacing:-.55px;position:relative}
.np-title .ctl{position:absolute;right:37px;top:19px}
.np-title svg:first-child{margin-left:-1px}
.np-menu{height:43px;border-bottom:3px solid #f0eff0;padding:3px 0 0 12px;display:grid;grid-template-columns:63px 65px 102px 77px 80px;align-items:center;font-size:24px;letter-spacing:-.6px;line-height:30px}
.np-body{height:1242px;display:flex}
.np-body pre{flex:1;margin:0;padding:1px 0 0 9px;font:27.700px/36.730px "DejaVu Sans Mono",monospace;color:#2a2a30}
.np-body pre i{display:inline-block;width:2px;height:34px;background:#111;vertical-align:-8px}
.np-scroll{width:34px;background:#f0f0f0;display:flex;flex-direction:column;justify-content:space-between;align-items:center;padding:11px 2px 9px 0;color:#b5b5b5}
.np-status{flex:1;background:#f0f0f0;border-top:2px solid #dedede;display:grid;grid-template-columns:1035px 292px 105px 250px 252px;align-items:stretch;font-size:23.500px;line-height:48px;letter-spacing:-.6px;position:relative}
.np-status span+span{border-left:2px solid #dcd8dc;padding-left:19px}
.np-status span:nth-child(3),.np-status span:nth-child(4),.np-status span:nth-child(5){padding-left:13px}
.grab{position:absolute;right:4px;bottom:4px}
.pointer{position:absolute;left:3024px;top:1510px;filter:drop-shadow(3px 4px 2px #0006)}

/* call controls */
.calls{position:absolute;left:1551px;top:137px;display:flex;gap:32px;z-index:3}
.rb{position:relative;width:80px;height:80px;border-radius:50%;display:grid;place-items:center;box-shadow:0 3px 12px #0007}
.rb>svg{width:48px;height:46px}
.lite{background:#cdd5df;color:#e0245e}
.mute{background:#8c8c8ab0}.hang{background:#e0245e}
.rb i{position:absolute;left:58px;top:50px;width:32px;height:32px;border-radius:50%;background:#fff;color:#3e4a58;display:grid;place-items:center}
.rb i svg{width:17px;height:17px}
.people{position:absolute;left:2797px;top:139px;width:82px;display:flex;flex-direction:column;align-items:center;color:#fff;z-index:3}
.people b{font-size:20.500px;margin-top:9px;letter-spacing:-.3px}
.people i{position:absolute;left:41px;top:-8px;width:32px;height:32px;border-radius:50%;background:#c9d0da;color:#444;font:600 19px/32px "Inter",sans-serif;text-align:center}
.clap{position:absolute;left:200px;top:1018px;width:80px;height:80px;border-radius:50%;background:#fff;display:grid;place-items:center;box-shadow:0 3px 10px #0009;z-index:3}
.layouts{position:absolute;left:190px;top:1820px;width:192px;height:56px;border-radius:9px;overflow:hidden;background:#fff;display:flex;z-index:3}
.layouts span{width:64px;display:grid;place-items:center}
.layouts .on{background:#1565c4}
.slider{position:absolute;left:440px;top:1842px;width:224px;height:12px;border-radius:6px;background:#1565c4;display:flex;align-items:center;z-index:3}
.slider i{width:8px;height:8px;border-radius:4px;background:#fff;margin:0 60px 0 4px}
.slider b{position:absolute;left:200px;top:-18px;width:48px;height:48px;border-radius:50%;background:#1565c4;border:8.500px solid #fff}
.zoombox{position:absolute;left:714px;top:1820px;width:112px;height:56px;border-radius:6px;background:#fff;z-index:3;display:flex;align-items:center}
.zoombox span{width:56px;height:40px;background:linear-gradient(#aaa,#aaa) center/24px 4px no-repeat}
.zoombox .plus{border-left:1px solid #ddd;background:linear-gradient(#444,#444) center/24px 4px no-repeat,linear-gradient(#444,#444) center/4px 24px no-repeat}
.zoombox i{position:absolute;left:88px;top:-10px;width:36px;height:36px;border-radius:50%;background:#c8501a;border:4px solid #f3a63b;color:#fff;font:700 20px/28px "Inter",sans-serif;text-align:center}

/* participants panel */
.panel{position:absolute;left:2880px;top:0;width:480px;height:334px;background:#000;z-index:4;overflow:hidden}
.bar{height:64px;margin-bottom:35px;background:#202226;display:grid;grid-template-columns:88px 80px 80px 80px 88px 35px;padding-left:16px;align-items:center;color:#f5f7f9;position:relative}
.bar svg{width:34px;height:34px}
.bar i{position:absolute;left:457px;top:17px;width:14px;height:14px;border-radius:7px;background:#d07e27}
.tiles{display:flex;gap:2px;margin-bottom:2px;padding-left:1px}
.tiles+.tiles{padding-left:61px}
.p{position:relative;width:118px;height:65px;background:linear-gradient(#2c4f87,#356399);display:flex;justify-content:center;padding-top:16px;overflow:hidden;flex:none}
.tiles+.tiles .p{height:66px}
.p b,.self b{width:34px;height:34px;border-radius:50%;background:#e2e8ef;border:1px solid #f4f6f9;color:#444;font-weight:500;font-size:15px;line-height:32px;text-align:center}
.p p{position:absolute;left:0;right:0;bottom:0;height:13px;padding:3px 9px 0 11px;background:#243040;color:#fff;font-size:9.800px;line-height:12px;display:flex;gap:12px;white-space:nowrap;letter-spacing:-.1px}
.p p svg{width:8px;height:8px;color:#ddd}
.p p svg:nth-of-type(1){margin-left:auto}
.p p .m{color:#f0356f}
.speak::after{content:"";position:absolute;inset:0;border:5px solid #42f59c}
.self{position:absolute;left:320px;top:244px;width:160px;height:90px;background:#28303f}
.self b{position:absolute;left:58px;top:22px;width:45px;height:45px;font-size:20px;line-height:46px;font-weight:400}
.self .cam{position:absolute;left:9px;top:50px;width:38px;height:30px;color:#f8356f}
.grip{position:absolute;left:120px;top:50px;width:32px;height:32px}
```
